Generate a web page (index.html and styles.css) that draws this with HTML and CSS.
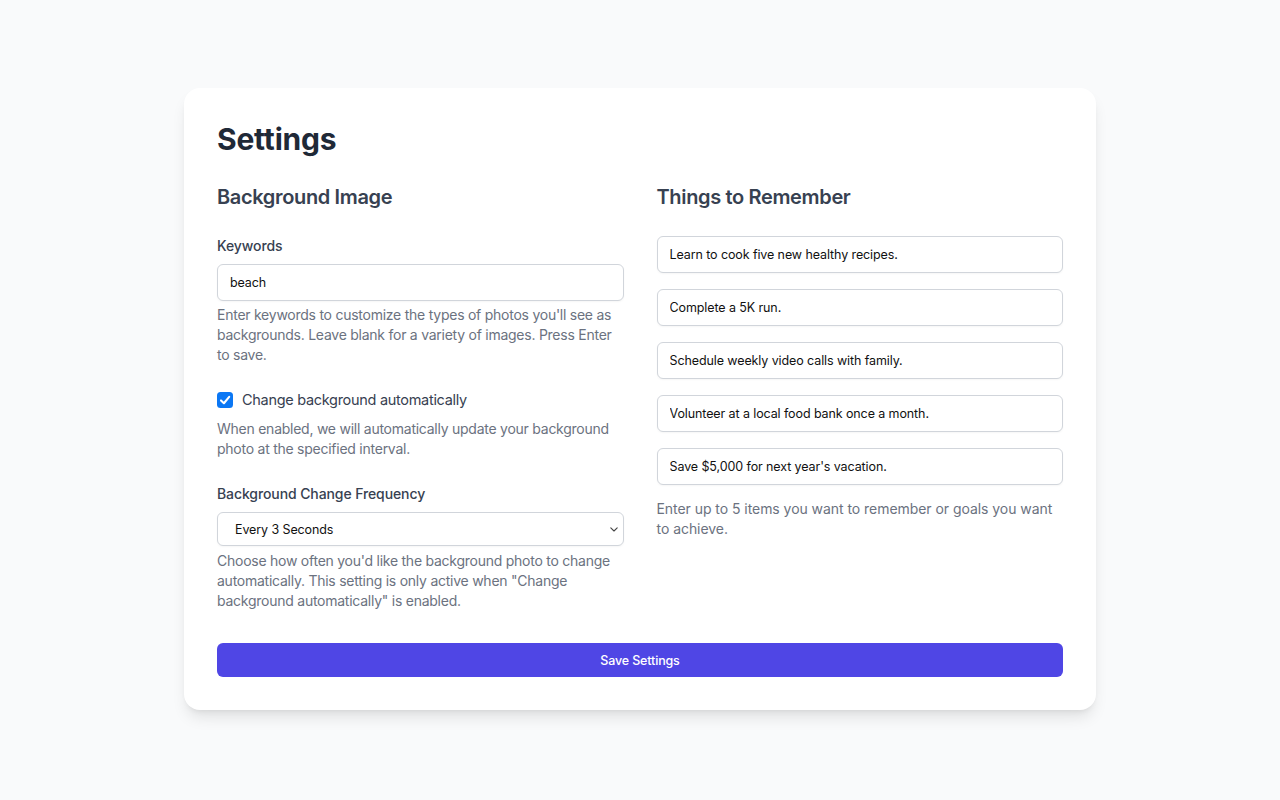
FILE: index.html
```html
<!DOCTYPE html>
<html lang="en">
<head>
<meta charset="utf-8">
<title>Settings</title>
<link rel="stylesheet" href="styles.css">
</head>
<body>
<main class="page">
  <form class="card">
    <h1 class="title">Settings</h1>
    <div class="columns">
      <section class="col">
        <h2 class="section-title">Background Image</h2>

        <div class="field field-keywords">
          <label class="label" for="keywords">Keywords</label>
          <input class="input" id="keywords" type="text" value="beach">
          <p class="help">Enter keywords to customize the types of photos you'll see as backgrounds. Leave blank for a variety of images. Press Enter to save.</p>
        </div>

        <div class="field">
          <label class="check-row">
            <span class="check-box">
              <svg viewBox="0 0 16 16" width="16" height="16"><path d="M4 8.4 6.9 11.2 12.2 4.9" fill="none" stroke="#fff" stroke-width="2.1" stroke-linecap="round" stroke-linejoin="round"/></svg>
            </span>
            <span class="check-text">Change background automatically</span>
          </label>
          <p class="help help-gap">When enabled, we will automatically update your background photo at the specified interval.</p>
        </div>

        <div class="field">
          <label class="label" for="freq">Background Change Frequency</label>
          <div class="select-wrap">
            <select class="select" id="freq">
              <option>Every 3 Seconds</option>
              <option>Every Minute</option>
              <option>Every Hour</option>
            </select>
            <svg class="chevron" viewBox="0 0 8 5" width="8" height="5"><path d="M0.8 0.8l3.2 3.2 3.2-3.2" fill="none" stroke="#444" stroke-width="1.1" stroke-linecap="round" stroke-linejoin="round"/></svg>
          </div>
          <p class="help help-select">Choose how often you'd like the background photo to change automatically. This setting is only active when "Change background automatically" is enabled.</p>
        </div>
      </section>

      <section class="col">
        <h2 class="section-title">Things to Remember</h2>
        <div class="list">
          <input class="input" type="text" value="Learn to cook five new healthy recipes.">
          <input class="input" type="text" value="Complete a 5K run.">
          <input class="input" type="text" value="Schedule weekly video calls with family.">
          <input class="input" type="text" value="Volunteer at a local food bank once a month.">
          <input class="input" type="text" value="Save $5,000 for next year's vacation.">
        </div>
        <p class="help help-list">Enter up to 5 items you want to remember or goals you want to achieve.</p>
      </section>
    </div>
    <button class="save" type="button">Save Settings</button>
  </form>
</main>
</body>
</html>
```

FILE: styles.css
```css
* {
  box-sizing: border-box;
}

html, body {
  margin: 0;
  padding: 0;
}

body {
  background: #f9fafb;
  font-family: Inter, "Noto Sans", sans-serif;
  color: #1f2937;
  min-height: 800px;
}

.page {
  display: flex;
  justify-content: center;
  padding-top: 88px;
}

.card {
  width: 912px;
  background: #fff;
  border-radius: 16px;
  padding: 33px 33px 33px;
  box-shadow: 0 10px 15px -3px rgba(0, 0, 0, 0.1), 0 4px 6px -4px rgba(0, 0, 0, 0.1);
}

.title {
  margin: 0 0 26px;
  font-size: 30px;
  line-height: 36px;
  font-weight: 700;
  color: #1f2937;
  letter-spacing: -0.2px;
}

.columns {
  display: grid;
  grid-template-columns: 1fr 1fr;
  column-gap: 33px;
}

.col {
  display: flex;
  flex-direction: column;
}

.section-title {
  margin: 0 0 25px;
  font-size: 20px;
  line-height: 28px;
  font-weight: 600;
  color: #374151;
  letter-spacing: -0.35px;
}

.field {
  display: flex;
  flex-direction: column;
  margin-bottom: 25px;
}

.field-keywords {
  margin-bottom: 24px;
}

.field:last-child {
  margin-bottom: 0;
}

.label {
  font-size: 14px;
  line-height: 20px;
  font-weight: 500;
  color: #374151;
  margin-bottom: 8px;
  letter-spacing: -0.1px;
}

.input,
.select {
  width: 100%;
  height: 37px;
  border: 1px solid #d1d5db;
  border-radius: 6px;
  padding: 0 12px;
  font-family: Inter, "Noto Sans", sans-serif;
  font-size: 12.5px;
  letter-spacing: -0.1px;
  color: #111;
  background: #fff;
  box-shadow: 0 1px 2px rgba(0, 0, 0, 0.04);
  outline: none;
}

.help {
  margin: 4px 0 0;
  font-size: 14px;
  line-height: 20px;
  color: #6b7280;
  letter-spacing: -0.25px;
}

.help-gap {
  margin-top: 9px;
}

.help-select {
  margin-top: 5px;
}

.check-row {
  display: flex;
  align-items: center;
  gap: 9px;
  height: 21px;
}

.check-box {
  width: 16px;
  height: 16px;
  border-radius: 3.5px;
  background: #0b77f4;
  display: flex;
}

.check-text {
  font-size: 14.5px;
  line-height: 20px;
  color: #374151;
  letter-spacing: -0.3px;
}

.select-wrap {
  position: relative;
}

.select {
  height: 34px;
  appearance: none;
  -webkit-appearance: none;
  padding: 0 17px;
}

.chevron {
  position: absolute;
  right: 6px;
  top: 15px;
}

.list {
  display: flex;
  flex-direction: column;
  gap: 16px;
}

.help-list {
  margin-top: 14px;
  letter-spacing: -0.05px;
}

.save {
  display: block;
  width: 100%;
  height: 34px;
  margin-top: 32px;
  border: none;
  border-radius: 6px;
  background: #4f46e5;
  color: #fff;
  font-family: Inter, "Noto Sans", sans-serif;
  font-size: 12.5px;
  font-weight: 500;
  letter-spacing: -0.15px;
}
```
